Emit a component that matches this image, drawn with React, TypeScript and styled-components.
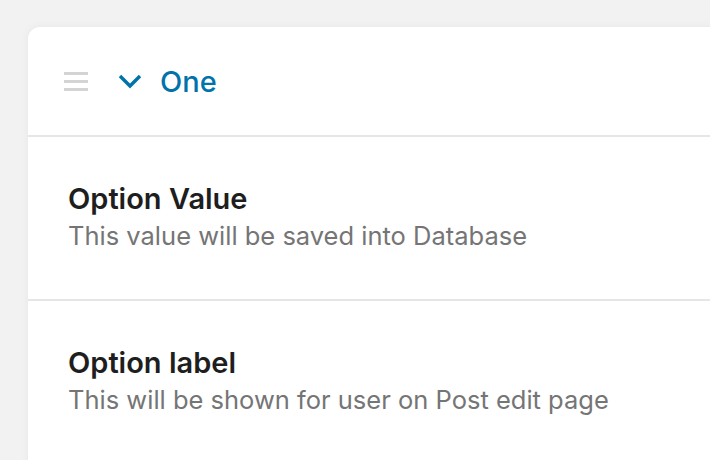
import React from 'react';
import styled, { createGlobalStyle } from 'styled-components';

const GlobalStyle = createGlobalStyle`
  html, body {
    margin: 0;
    padding: 0;
    background: #f2f2f2;
    overflow: hidden;
  }
  body {
    font-family: Inter, "Noto Sans", "Liberation Sans", sans-serif;
    -webkit-font-smoothing: antialiased;
  }
`;

const Page = styled.div`
  width: 710px;
  height: 460px;
  padding: 27px 0 0 28px;
  box-sizing: border-box;
  overflow: hidden;
`;

const Card = styled.div`
  width: 740px;
  min-height: 480px;
  background: #fff;
  border-radius: 12px;
  box-shadow: 0 0 10px rgba(0, 0, 0, 0.05);
`;

const Header = styled.div`
  display: flex;
  align-items: center;
  height: 108px;
  padding-left: 36px;
  border-bottom: 2px solid #e6e6e6;
`;

const DragHandle = styled.div`
  display: flex;
  flex-direction: column;
  gap: 5px;
  width: 24px;
  margin-right: 30px;

  & > span {
    display: block;
    height: 3px;
    background: #d4d4d4;
  }
`;

const Toggle = styled.button`
  display: flex;
  align-items: center;
  gap: 18px;
  border: 0;
  background: none;
  padding: 0;
  font: inherit;
  font-size: 29px;
  font-weight: 500;
  color: #0073aa;
  cursor: pointer;
`;

const Section = styled.div<{ $last?: boolean }>`
  padding: 44px 40px 44px;
  border-bottom: ${(p) => (p.$last ? 'none' : '2px solid #e6e6e6')};
`;

const Title = styled.div`
  font-size: 29px;
  line-height: 36px;
  font-weight: 600;
  color: #1e1e1e;
`;

const Help = styled.div`
  font-size: 25.5px;
  line-height: 38px;
  color: #757575;
`;

function Chevron() {
  return (
    <svg width="24" height="15" viewBox="0 0 24 15" fill="none">
      <path d="M2 2l10 10L22 2" stroke="currentColor" strokeWidth="3.4" />
    </svg>
  );
}

const fields = [
  { title: 'Option Value', help: 'This value will be saved into Database' },
  { title: 'Option label', help: 'This will be shown for user on Post edit page' },
];

export default function App() {
  return (
    <Page>
      <GlobalStyle />
      <Card>
        <Header>
          <DragHandle>
            <span />
            <span />
            <span />
          </DragHandle>
          <Toggle>
            <Chevron />
            One
          </Toggle>
        </Header>
        {fields.map((f, i) => (
          <Section key={f.title} $last={i === fields.length - 1}>
            <Title>{f.title}</Title>
            <Help>{f.help}</Help>
          </Section>
        ))}
      </Card>
    </Page>
  );
}
